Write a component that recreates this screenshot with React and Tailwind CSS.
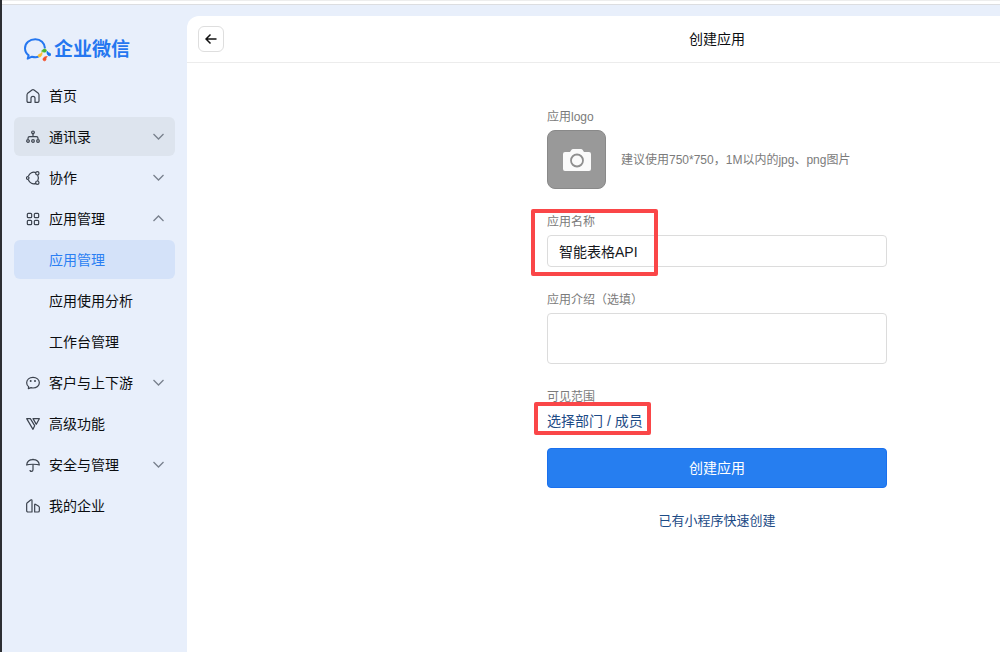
import clsx from 'clsx';

const icons = {
    home: (
        <path d="M15 40H7q-4 0-4-4V18q0-3 2-5L18 3q3-2 6 0l13 10q2 2 2 5v18q0 4-4 4h-8V28a6 6 0 0 0-12 0v12Z" />
    ),
    contacts: (
        <>
            <circle cx="21" cy="7" r="4" />
            <path d="M21 12v8M6 27v-2q0-5 5-5h20q5 0 5 5v2" />
            <circle cx="6" cy="33" r="4" />
            <circle cx="21" cy="33" r="4" />
            <circle cx="36" cy="33" r="4" />
        </>
    ),
    collab: (
        <>
            <path d="M30 5C20 1 11 6 7 16M7 26c4 10 13 15 23 11M35 12c3 6 3 12 0 18" />
            <circle cx="5" cy="21" r="4" />
            <circle cx="34" cy="7" r="5" />
            <circle cx="34" cy="35" r="5" />
        </>
    ),
    apps: (
        <>
            <rect x="4" y="4" width="13" height="13" rx="3" />
            <rect x="25" y="4" width="13" height="13" rx="3" />
            <rect x="4" y="25" width="13" height="13" rx="3" />
            <rect x="25" y="25" width="13" height="13" rx="3" />
        </>
    ),
    customer: (
        <>
            <path d="M21 4C10 4 2 11 2 20c0 6 3 10 6 12l-1 6 8-3c2 .6 4 1 6 1 11 0 19-7 19-16S32 4 21 4Z" />
            <circle cx="14" cy="15" r="3" fill="currentColor" stroke="none" />
            <circle cx="27" cy="15" r="3" fill="currentColor" stroke="none" />
        </>
    ),
    advanced: (
        <>
            <path d="M2 5h11l13 21-5 11Z" />
            <path d="M21 5h19l-9 17Z" />
        </>
    ),
    security: (
        <>
            <path d="M2 21C3 11 11 5 21 5s18 6 19 16c-5-3-33-3-38 0Z" />
            <path d="M21 2v3M21 19v16q0 5-5 5-4 0-4-4" />
        </>
    ),
    company: (
        <>
            <path d="M18 39H6q-4 0-4-4V15q0-2 2-4L14 3q4-2 4 2Z" />
            <path d="M26 39V17q0-2 2-1l9 5q3 2 3 4v10q0 4-4 4Z" />
        </>
    ),
};

const menu = [
    { label: '首页', icon: 'home' },
    { label: '通讯录', icon: 'contacts', arrow: 'down', hovered: true },
    { label: '协作', icon: 'collab', arrow: 'down' },
    { label: '应用管理', icon: 'apps', arrow: 'up' },
    { label: '应用管理', active: true },
    { label: '应用使用分析' },
    { label: '工作台管理' },
    { label: '客户与上下游', icon: 'customer', arrow: 'down' },
    { label: '高级功能', icon: 'advanced' },
    { label: '安全与管理', icon: 'security', arrow: 'down' },
    { label: '我的企业', icon: 'company' },
];

const MenuIcon = ({ name }) => (
    <svg
        viewBox="0 0 42 42"
        className="size-3.5 shrink-0 text-[#3c434e]"
        fill="none"
        stroke="currentColor"
        strokeWidth="3.6"
        strokeLinejoin="round"
        aria-hidden="true"
    >
        {icons[name]}
    </svg>
);

const Arrow = ({ up }) => (
    <svg
        viewBox="0 0 11 7"
        className={clsx('ml-auto h-[7px] w-[11px] shrink-0', up && 'rotate-180')}
        fill="none"
        stroke="#79818d"
        strokeWidth="1.3"
        aria-hidden="true"
    >
        <path d="M.5 1l5 5 5-5" />
    </svg>
);

const Logo = () => (
    <div className="flex h-6 items-center gap-[3px] pl-[10px]">
        <svg viewBox="0 0 81 72" className="h-6 w-[27px]" fill="none" aria-hidden="true">
            <path
                d="M63 31C62 15 50 4 34 4 17 4 3 15 3 31c0 9 4 16 11 21l-3 10 13-6c8 2 14 2 20 0"
                stroke="#2577f0"
                strokeWidth="6"
                strokeLinejoin="round"
            />
            <path d="M53 40c2-4 4-6 9-7 5 0 7 5 4 8-3 2-8 2-13-1Z" fill="#4cb52c" stroke="#4cb52c" strokeWidth="2" />
            <path d="M69 40c4 2 5 5 9 6 5 2 2 9-3 7-5-1-7-7-6-13Z" fill="#1273ee" stroke="#1273ee" strokeWidth="2" />
            <path d="M70 56c-4 2-4 5-4 9-2 6-10 4-9-2 1-5 7-8 13-7Z" fill="#f4502b" stroke="#f4502b" strokeWidth="2" />
            <path d="M54 43c1 6-1 12-6 14-6 1-8-5-3-8 4-1 6-2 9-6Z" fill="#fbc02d" stroke="#fbc02d" strokeWidth="2" />
        </svg>
        <span className="text-[19px] leading-6 font-bold text-[#2577f0]">企业微信</span>
    </div>
);

const Sidebar = () => (
    <aside className="w-[185px] shrink-0 px-3 pt-[33px]">
        <Logo />
        <nav className="mt-[14px] flex flex-col gap-0.5">
            {menu.map((item, index) => (
                <a
                    key={index}
                    href="#"
                    className={clsx(
                        'flex h-[39px] items-center gap-[9px] rounded-md pr-[11px] text-sm',
                        item.icon ? 'pl-3' : 'pl-[35px]',
                        item.hovered && 'bg-[#dde4ee]',
                        item.active ? 'bg-[#d4e2f9] text-[#2b7ff3]' : 'text-[#0b0d10]'
                    )}
                >
                    {item.icon && <MenuIcon name={item.icon} />}
                    <span>{item.label}</span>
                    {item.arrow && <Arrow up={item.arrow === 'up'} />}
                </a>
            ))}
        </nav>
    </aside>
);

const CreateForm = () => (
    <form className="mx-auto mt-[46px] flex w-[340px] flex-col gap-[25px]">
        <div className="flex flex-col gap-[5px]">
            <label htmlFor="logo" className="text-xs leading-4 text-[#7b7b7b]">应用logo</label>
            <div className="flex items-center gap-[15px]">
                <button
                    id="logo"
                    type="button"
                    aria-label="应用logo"
                    className="flex size-[59px] shrink-0 items-center justify-center rounded-lg border border-[#898989] bg-[#999]"
                >
                    <svg viewBox="0 0 28 24" className="h-6 w-7" aria-hidden="true">
                        <path
                            d="M2 4h5l1.5-2.2Q9 1 10 1h8q1 0 1.5.8L21 4h5q2 0 2 2v15q0 2-2 2H2q-2 0-2-2V6q0-2 2-2Z"
                            fill="#fafafa"
                        />
                        <circle cx="14" cy="12.5" r="6" fill="none" stroke="#8f8f8f" strokeWidth="1.8" />
                    </svg>
                </button>
                <span className="text-xs whitespace-nowrap text-[#7b7b7b]">
                    建议使用750*750，1M以内的jpg、png图片
                </span>
            </div>
        </div>

        <div className="relative flex flex-col gap-[5px]">
            <label htmlFor="name" className="text-xs leading-4 text-[#7b7b7b]">应用名称</label>
            <input
                id="name"
                type="text"
                defaultValue="智能表格API"
                className="h-8 rounded border border-[#dcdcdc] px-[11px] text-sm text-[#15181d] outline-none"
            />
            <div className="pointer-events-none absolute -top-[5px] -left-4 h-[67px] w-[127px] rounded-xs border-4 border-[#fa4648]" />
        </div>

        <div className="flex flex-col gap-[5px]">
            <label htmlFor="intro" className="text-xs leading-4 text-[#7b7b7b]">应用介绍（选填）</label>
            <textarea
                id="intro"
                className="h-[51px] resize-none rounded border border-[#dcdcdc] px-[11px] py-1 text-sm outline-none"
            />
        </div>

        <div className="flex flex-col">
            <span className="text-xs leading-4 text-[#7b7b7b]">可见范围</span>
            <div className="relative mt-[5px] flex">
                <a href="#" className="text-sm leading-[22px] text-[#1d4b86]">选择部门 / 成员</a>
                <div className="pointer-events-none absolute -top-2 -left-[13px] h-[33px] w-[117px] rounded-xs border-4 border-[#fa4648]" />
            </div>
            <button
                type="submit"
                className="mt-4 h-10 rounded border border-[#1a70ee] bg-[#267ef0] text-sm text-white"
            >
                创建应用
            </button>
            <a href="#" className="mt-6 self-center text-[13px] leading-[18px] text-[#1d4b86]">
                已有小程序快速创建
            </a>
        </div>
    </form>
);

const App = () => (
    <div className="flex min-h-screen overflow-hidden bg-[#e8effb] font-['Liberation_Sans','Noto_Sans_CJK_SC',sans-serif]">
        <div className="w-0.5 shrink-0 bg-[#2c2e32]" />
        <div className="flex min-w-0 flex-1 flex-col">
            <div className="h-[5px] border-t border-b border-t-[#ededed] border-b-[#dcdde0] bg-white" />
            <div className="flex flex-1">
                <Sidebar />
                {/* the console never gets narrower than this, the rest runs off to the right */}
                <main className="mt-[11px] min-w-[1060px] flex-1 rounded-tl-xl bg-white">
                    <header className="grid h-[47px] grid-cols-[1fr_auto_1fr] items-center border-b border-[#ececec] px-[11px]">
                        <button
                            type="button"
                            aria-label="返回"
                            className="flex size-[26px] items-center justify-center rounded-md border border-[#dedede]"
                        >
                            <svg viewBox="0 0 12 12" className="size-3" fill="none" stroke="#111" strokeWidth="1.5" aria-hidden="true">
                                <path d="M11.5 6H1M5.5 1.5L1 6l4.5 4.5" />
                            </svg>
                        </button>
                        <h1 className="text-sm text-[#0b0d10]">创建应用</h1>
                    </header>
                    <CreateForm />
                </main>
            </div>
        </div>
    </div>
);

export default App;
